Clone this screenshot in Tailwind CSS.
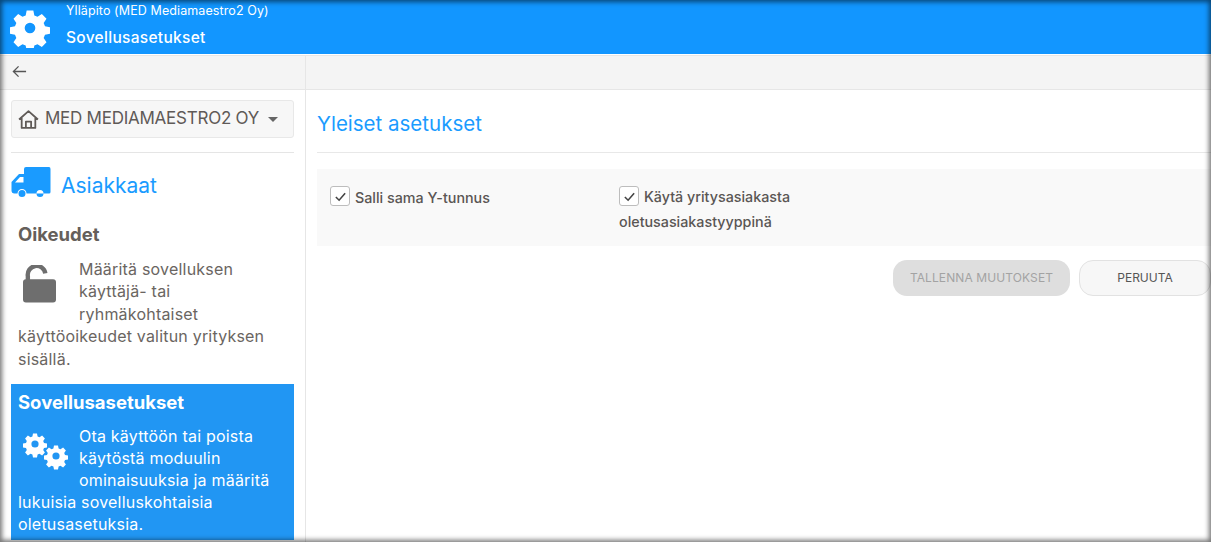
<!DOCTYPE html>
<html><head><meta charset="utf-8"><script src="https://cdn.jsdelivr.net/npm/@tailwindcss/browser@4"></script></head>
<body class="overflow-hidden">
<div class="relative w-[1211px] h-[542px] overflow-hidden bg-white font-['Inter',sans-serif] text-[#5f5a57]">
  <header class="h-[54px] bg-[#1296ff] flex text-white">
    <div class="w-[66px] flex items-start pl-[10px] pt-[8px] shrink-0">
      <svg viewBox="0 0 24 24" class="w-[40px] h-[40px]" fill="#fff"><path fill-rule="evenodd" d="M10 1.500h4l.6 3 1.900.8 2.600-1.700 2.800 2.800-1.700 2.600.8 1.900 3 .6v4l-3 .6-.8 1.900 1.700 2.600-2.800 2.800-2.600-1.700-1.900.8-.6 3h-4l-.6-3-1.900-.8-2.600 1.700-2.800-2.800 1.700-2.600-.8-1.900-3-.6v-4l3-.6.8-1.900-1.700-2.600 2.800-2.800 2.600 1.700 1.900-.8zM12 8.800a3.200 3.200 0 1 0 0 6.400 3.200 3.200 0 0 0 0-6.400z"/></svg>
    </div>
    <div class="pt-[2px]">
      <div class="text-[12.5px] leading-[18px] tracking-[0.1px]">Ylläpito (MED Mediamaestro2 Oy)</div>
      <div class="text-[15.5px] leading-[20px] mt-[8px] font-medium tracking-[0.3px]">Sovellusasetukset</div>
    </div>
  </header>
  <div class="h-[35px] mt-[1px] flex bg-[#f4f4f4] border-t border-b border-[#e6e6e6]">
    <div class="w-[306px] border-r border-[#e6e6e6] flex items-center pl-[12px] pb-[2px]">
      <svg viewBox="0 0 16 16" class="w-[15px] h-[15px]" fill="none" stroke="#555" stroke-width="1.4"><path d="M15 8H1.500M7 2.500 1.500 8 7 13.500"/></svg>
    </div>
  </div>
  <div class="flex h-[453px]">
    <aside class="w-[306px] shrink-0 border-r border-[#e6e6e6] px-[11px] pt-[10px] overflow-hidden">
      <div class="w-[283px] h-[38px] bg-[#f7f7f7] border border-[#e8e8e8] rounded-[3px] flex items-center pl-[6px]">
        <svg viewBox="0 0 20 20" class="w-[21px] h-[21px] shrink-0" fill="none" stroke="#5f5a57" stroke-width="1.700" stroke-linejoin="round"><path d="M1 10 10 2l9 8M3.500 8.500V18h13V8.500M7.500 18v-6h5v6"/></svg>
        <span class="ml-[6px] text-[17px] tracking-[-0.25px] whitespace-nowrap">MED MEDIAMAESTRO2 OY</span>
        <span class="ml-[9px] w-0 h-0 border-x-[5px] border-x-transparent border-t-[5px] border-t-[#666]"></span>
      </div>
      <div class="w-[283px] border-t border-[#e5e5e5] mt-[14px]"></div>
      <div class="flex items-start mt-[13px] h-[36px] text-[#1a9bff]">
        <svg viewBox="0 0 40 32" class="w-[40px] h-[32px] mt-[1px] shrink-0" fill="#1a9bff"><path fill-rule="evenodd" d="M13 2q0-2 2-2h23q1.500 0 1.500 2v23q0 1.500-1.500 1.500H15.500a4.500 4.500 0 0 0-9 0H3.500a3 3 0 0 1-3-3V15L8 7h5zM4 15.500h8.500V10H9zM11 23a3.500 3.500 0 1 1 0 7 3.500 3.500 0 0 1 0-7zm18 0a3.500 3.500 0 1 1 0 7 3.500 3.500 0 0 1 0-7z"/></svg>
        <span class="ml-[10px] mt-[4px] leading-[32px] text-[21px]">Asiakkaat</span>
      </div>
      <div class="px-[7px] mt-[20px] mb-[14px]">
        <h3 class="text-[18.5px] leading-[24px] font-bold text-[#655f5b]">Oikeudet</h3>
        <div class="text-[16px] tracking-[0.2px] leading-[22.4px] mt-[12px] flow-root text-[#6a6561]">
          <span class="float-left w-[61px] h-[66px] pl-[5px] pt-[7px]">
            <svg viewBox="0 0 34 38" class="w-[33px] h-[38px]" fill="#6e6e6e"><path d="M3 14h28q3 0 3 3v18q0 3-3 3H3q-3 0-3-3V17q0-3 3-3z"/><path d="M5 15v-4a9 9 0 0 1 18-3" fill="none" stroke="#6e6e6e" stroke-width="4.500"/></svg>
          </span>
          Määritä sovelluksen käyttäjä- tai<br>ryhmäkohtaiset käyttöoikeudet valitun yrityksen sisällä.
        </div>
      </div>
      <div class="w-[283px] bg-[#2196f3] text-white px-[7px] pt-[6px] h-[156px]">
        <h3 class="text-[18.5px] leading-[24px] font-bold">Sovellusasetukset</h3>
        <div class="text-[16px] tracking-[0.2px] leading-[22px] mt-[11px] flow-root">
          <span class="float-left w-[61px] h-[66px] pl-[5px] pt-[7px]">
            <svg viewBox="0 0 46 38" class="w-[46px] h-[38px]" fill="#fff">
              <path fill-rule="evenodd" d="M10 1.500h4l.6 3 1.900.8 2.600-1.700 2.800 2.800-1.700 2.600.8 1.900 3 .6v4l-3 .6-.8 1.900 1.700 2.600-2.800 2.800-2.600-1.700-1.900.8-.6 3h-4l-.6-3-1.900-.8-2.600 1.700-2.800-2.800 1.700-2.600-.8-1.900-3-.6v-4l3-.6.8-1.900-1.700-2.600 2.800-2.800 2.600 1.700 1.900-.8zM12 8.400a3.600 3.600 0 1 0 0 7.200 3.600 3.600 0 0 0 0-7.200z"/>
              <path fill-rule="evenodd" transform="translate(21 12)" d="M10 1.500h4l.6 3 1.900.8 2.600-1.700 2.800 2.800-1.700 2.600.8 1.900 3 .6v4l-3 .6-.8 1.900 1.700 2.600-2.800 2.800-2.600-1.700-1.900.8-.6 3h-4l-.6-3-1.900-.8-2.600 1.700-2.800-2.800 1.700-2.600-.8-1.900-3-.6v-4l3-.6.8-1.900-1.700-2.600 2.800-2.800 2.600 1.700 1.900-.8zM12 8.400a3.600 3.600 0 1 0 0 7.200 3.600 3.600 0 0 0 0-7.200z"/>
            </svg>
          </span>
          Ota käyttöön tai poista käytöstä moduulin ominaisuuksia ja määritä lukuisia sovelluskohtaisia oletusasetuksia.
        </div>
      </div>
    </aside>
    <main class="flex-1 pl-[11px] min-w-0">
      <h1 class="text-[20.5px] leading-[28px] text-[#1a9bff] mt-[20px] pb-[14px] border-b border-[#e8e8e8]">Yleiset asetukset</h1>
      <div class="mt-[16px] h-[77px] bg-[#f9f9f9] flex text-[14.3px] font-medium text-[#5a5654]">
        <label class="w-[302px] pl-[13px] pt-[17px] flex items-start">
          <span class="w-[20px] h-[20px] border border-[#bdbdbd] rounded-[3px] bg-white flex items-center justify-center shrink-0"><svg viewBox="0 0 14 14" class="w-[13px] h-[13px]" fill="none" stroke="#444" stroke-width="1.700"><path d="M2 7.500 5.500 11 12 3.500"/></svg></span>
          <span class="ml-[5px] mt-[1px] leading-[22px]">Salli sama Y-tunnus</span>
        </label>
        <div class="w-[260px] pt-[16px] leading-[24.5px]">
          <span class="relative -top-[2px] inline-flex w-[20px] h-[20px] border border-[#bdbdbd] rounded-[3px] bg-white items-center justify-center align-middle -mt-[3px] -mb-[3px] mr-[5px]"><svg viewBox="0 0 14 14" class="w-[13px] h-[13px]" fill="none" stroke="#444" stroke-width="1.700"><path d="M2 7.500 5.500 11 12 3.500"/></svg></span>Käytä yritysasiakasta oletusasiakastyyppinä
        </div>
      </div>
      <div class="flex justify-end gap-[9px] mt-[14px] text-[12px] h-[36px]">
        <button class="w-[177px] rounded-[14px] bg-[#dedede] text-[#a3a3a3] tracking-[0.1px]">TALLENNA MUUTOKSET</button>
        <button class="w-[132px] rounded-[14px] bg-[#f7f7f7] border border-[#e2e2e2] text-[#555]">PERUUTA</button>
      </div>
    </main>
  </div>
  <div class="absolute inset-0 pointer-events-none shadow-[inset_0_0_5px_2px_rgba(0,0,0,0.55)]"></div>
</div>
</body></html>
